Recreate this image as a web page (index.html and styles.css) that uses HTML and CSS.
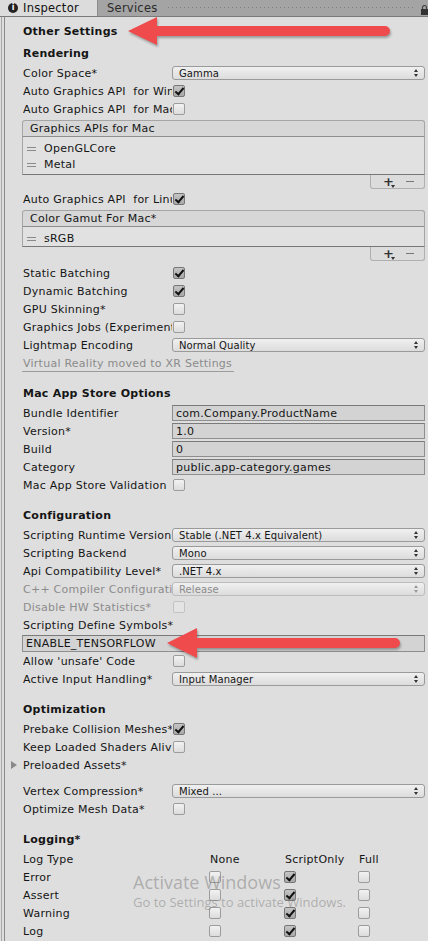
FILE: index.html
```html
<!DOCTYPE html>
<html>
<head>
<meta charset="utf-8">
<link rel="stylesheet" href="styles.css">
</head>
<body>
<div class="tabbar">
  <div class="tab active"><span class="info">i</span><span>Inspector</span></div>
  <div class="tab">Services</div>
  <div class="drag"></div>
  <svg class="lock" width="7" height="10" viewBox="0 0 7 10"><path d="M1.5 4V2.5a2 2 0 0 1 4 0V4" fill="none" stroke="#444" stroke-width="1.2"/><rect x="0" y="4" width="7" height="6" fill="#333"/></svg>
</div>
<div class="panel">
 <div class="inner">
  <div class="row heading">Other Settings</div>

  <section class="sec sec-first">
    <div class="row heading">Rendering</div>
    <div class="row"><span class="label">Color Space*</span><div class="popup"><span>Gamma</span><i class="arr"></i></div></div>
    <div class="row"><span class="label">Auto Graphics API  for Windows</span><span class="cb on"></span></div>
    <div class="row"><span class="label">Auto Graphics API  for Mac</span><span class="cb"></span></div>
    <div class="list list-a">
      <div class="list-head">Graphics APIs for Mac</div>
      <div class="list-body">
        <div class="item"><span class="handle"></span>OpenGLCore</div>
        <div class="item"><span class="handle"></span>Metal</div>
      </div>
      <div class="list-foot"><span class="plus">+</span><span class="minus"></span></div>
    </div>
    <div class="row"><span class="label">Auto Graphics API  for Linux</span><span class="cb on"></span></div>
    <div class="list list-b">
      <div class="list-head">Color Gamut For Mac*</div>
      <div class="list-body short">
        <div class="item"><span class="handle"></span>sRGB</div>
      </div>
      <div class="list-foot"><span class="plus">+</span><span class="minus"></span></div>
    </div>
    <div class="row"><span class="label">Static Batching</span><span class="cb on"></span></div>
    <div class="row"><span class="label">Dynamic Batching</span><span class="cb on"></span></div>
    <div class="row"><span class="label">GPU Skinning*</span><span class="cb"></span></div>
    <div class="row"><span class="label">Graphics Jobs (Experimental)</span><span class="cb"></span></div>
    <div class="row"><span class="label">Lightmap Encoding</span><div class="popup"><span>Normal Quality</span><i class="arr"></i></div></div>
    <div class="row"><span class="vr">Virtual Reality moved to XR Settings</span></div>
  </section>

  <section class="sec">
    <div class="row heading">Mac App Store Options</div>
    <div class="row"><span class="label">Bundle Identifier</span><div class="field">com.Company.ProductName</div></div>
    <div class="row"><span class="label">Version*</span><div class="field">1.0</div></div>
    <div class="row"><span class="label">Build</span><div class="field">0</div></div>
    <div class="row"><span class="label">Category</span><div class="field">public.app-category.games</div></div>
    <div class="row"><span class="label">Mac App Store Validation</span><span class="cb"></span></div>
  </section>

  <section class="sec">
    <div class="row heading">Configuration</div>
    <div class="row"><span class="label">Scripting Runtime Version</span><div class="popup"><span>Stable (.NET 4.x Equivalent)</span><i class="arr"></i></div></div>
    <div class="row"><span class="label">Scripting Backend</span><div class="popup"><span>Mono</span><i class="arr"></i></div></div>
    <div class="row"><span class="label">Api Compatibility Level*</span><div class="popup"><span>.NET 4.x</span><i class="arr"></i></div></div>
    <div class="row dis"><span class="label">C++ Compiler Configuration</span><div class="popup"><span>Release</span><i class="arr"></i></div></div>
    <div class="row dis"><span class="label">Disable HW Statistics*</span><span class="cb"></span></div>
    <div class="row"><span class="label wide">Scripting Define Symbols*</span></div>
    <div class="row"><div class="field full">ENABLE_TENSORFLOW</div></div>
    <div class="row"><span class="label">Allow 'unsafe' Code</span><span class="cb"></span></div>
    <div class="row"><span class="label">Active Input Handling*</span><div class="popup"><span>Input Manager</span><i class="arr"></i></div></div>
  </section>

  <section class="sec">
    <div class="row heading">Optimization</div>
    <div class="row"><span class="label">Prebake Collision Meshes*</span><span class="cb on"></span></div>
    <div class="row"><span class="label">Keep Loaded Shaders Alive*</span><span class="cb"></span></div>
    <div class="row foldout"><i class="tri"></i><span>Preloaded Assets*</span></div>
    <div class="row gap"><span class="label">Vertex Compression*</span><div class="popup"><span>Mixed ...</span><i class="arr"></i></div></div>
    <div class="row"><span class="label">Optimize Mesh Data*</span><span class="cb"></span></div>
  </section>

  <section class="sec">
    <div class="row heading">Logging*</div>
    <div class="log">
      <span>Log Type</span><span class="ch">None</span><span class="ch">ScriptOnly</span><span class="ch">Full</span>
      <span>Error</span><span><i class="cb"></i></span><span><i class="cb on"></i></span><span><i class="cb"></i></span>
      <span>Assert</span><span><i class="cb"></i></span><span><i class="cb on"></i></span><span><i class="cb"></i></span>
      <span>Warning</span><span><i class="cb"></i></span><span><i class="cb on"></i></span><span><i class="cb"></i></span>
      <span>Log</span><span><i class="cb"></i></span><span><i class="cb on"></i></span><span><i class="cb"></i></span>
    </div>
  </section>
 </div>
</div>

<svg class="arrow arrow-1" width="280" height="45" viewBox="0 0 280 45"><path d="M8 22 L37 8 L37 17 L265 17 A5 5 0 0 1 265 27 L37 27 L37 36 Z" fill="#ef4a4c"/></svg>
<svg class="arrow arrow-2" width="250" height="45" viewBox="0 0 250 45"><path d="M7 23 L37 8 L37 18 L235 18 A5 5 0 0 1 235 28 L37 28 L37 38 Z" fill="#ef4a4c"/></svg>

<div class="watermark">
  <div class="wm1">Activate Windows</div>
  <div class="wm2">Go to Settings to activate Windows.</div>
</div>
</body>
</html>
```

FILE: styles.css
```css
html, body { margin: 0; padding: 0; }
body {
  width: 428px;
  height: 941px;
  overflow: hidden;
  position: relative;
  background: #dedede;
  font-family: "DejaVu Sans", Verdana, sans-serif;
  font-size: 11px;
  letter-spacing: 0.25px;
  color: #151515;
}

/* tab bar */
.tabbar {
  height: 16px;
  background: #a4a4a4;
  border-bottom: 1px solid #7a7a7a;
  display: flex;
  align-items: stretch;
}
.tab {
  display: flex;
  align-items: center;
  color: #2a2a2a;
  font-size: 11.5px;
  padding: 0 8px 0 9px;
}
.tab.active {
  width: 98px;
  box-sizing: border-box;
  background: #dcdcdc;
  padding-left: 8px;
  gap: 5px;
  color: #111;
  border-right: 1px solid #8c8c8c;
}
.info {
  width: 10px;
  height: 10px;
  border-radius: 50%;
  background: #222;
  color: #fff;
  font-size: 8px;
  font-weight: bold;
  display: flex;
  align-items: center;
  justify-content: center;
  line-height: 1;
  letter-spacing: 0;
}
.drag {
  flex: 1;
  margin: 7px 6px 0 2px;
  height: 1px;
  background: repeating-linear-gradient(90deg, #7e7e7e 0 1px, transparent 1px 4px);
}
.lock { margin: 5px 0 0 0; flex: none; }

/* panel */
.panel {
  margin-left: 1px;
  border-left: 1px solid #a9a9a9;
  padding-left: 2px;
}
.inner {
  border-left: 1px solid #8a8a8a;
  padding: 5px 3px 0 18px;
  min-height: 930px;
}
.row {
  height: 18px;
  display: flex;
  align-items: center;
  white-space: pre;
}
.heading { font-weight: bold; margin-bottom: 2px; }
.sec { margin-top: 12px; }
.sec-first { margin-top: 4px; }
.label {
  width: 149px;
  flex: none;
  overflow: hidden;
  white-space: pre;
}
.label.wide { width: auto; }
.dis { color: #8c8c8c; }

/* checkbox */
.cb {
  display: block;
  width: 12px;
  height: 12px;
  box-sizing: border-box;
  margin-left: 1px;
  border: 1px solid #9c9c9c;
  border-radius: 2px;
  background: linear-gradient(#f2f2f2, #dcdcdc);
  flex: none;
  position: relative;
}
.cb.on {
  background: linear-gradient(#c4c4c4, #a8a8a8);
  border-color: #777;
}
.cb.on::after {
  content: "";
  position: absolute;
  left: 3px;
  top: 0px;
  width: 3px;
  height: 7px;
  border-right: 2px solid #111;
  border-bottom: 2px solid #111;
  transform: rotate(40deg);
}
.dis .cb { border-color: #c2c2c2; background: #e4e4e4; }

/* popup */
.popup {
  flex: 1;
  height: 14px;
  box-sizing: border-box;
  border: 1px solid #9a9a9a;
  border-radius: 3px;
  background: linear-gradient(#f0f0f0, #dcdcdc);
  display: flex;
  align-items: center;
  padding: 0 5px 0 6px;
  font-size: 10px;
  letter-spacing: 0.1px;
}
.popup span { flex: 1; }
.dis .popup { border-color: #bdbdbd; }
.arr {
  width: 5px;
  height: 8px;
  flex: none;
  position: relative;
}
.arr::before, .arr::after {
  content: "";
  position: absolute;
  left: 0;
  border-left: 2.5px solid transparent;
  border-right: 2.5px solid transparent;
}
.arr::before { top: 0; border-bottom: 3px solid #333; }
.arr::after { bottom: 0; border-top: 3px solid #333; }
.dis .arr::before { border-bottom-color: #999; }
.dis .arr::after { border-top-color: #999; }

/* text field */
.field {
  flex: 1;
  height: 16px;
  box-sizing: border-box;
  border: 1px solid #8e8e8e;
  border-top-color: #7a7a7a;
  background: #d3d3d3;
  padding-left: 3px;
  display: flex;
  align-items: center;
}
.field.full { margin-left: -1px; height: 17px; }

/* reorderable list */
.list { margin: 2px 0 1px -1px; display: flex; flex-direction: column; }
.list-b { margin-bottom: 3px; }
.list-head {
  height: 17px;
  box-sizing: border-box;
  border: 1px solid #a5a5a5;
  border-bottom-color: #8e8e8e;
  border-radius: 3px 3px 0 0;
  background: #d7d7d7;
  padding-left: 7px;
  display: flex;
  align-items: center;
}
.list-body {
  height: 38px;
  box-sizing: border-box;
  border: 1px solid #a5a5a5;
  border-top: none;
  border-bottom: 1px solid #777;
  background: #e1e1e1;
  padding-top: 3px;
}
.list-body.short { height: 20px; }
.item { height: 16px; display: flex; align-items: center; }
.handle {
  width: 9px;
  height: 2px;
  border-top: 1px solid #8a8a8a;
  border-bottom: 1px solid #8a8a8a;
  margin: 2px 8px 0 4px;
}
.list-foot {
  align-self: flex-end;
  width: 55px;
  height: 14px;
  box-sizing: border-box;
  border: 1px solid #b0b0b0;
  border-top: none;
  border-radius: 0 0 3px 3px;
  background: #dcdcdc;
  display: flex;
  align-items: center;
  justify-content: space-around;
  padding: 0 4px 0 6px;
}
.plus { font-weight: bold; font-size: 13px; color: #333; line-height: 1; position: relative; }
.plus::after {
  content: "";
  position: absolute;
  left: 8px;
  top: 10px;
  border-left: 2px solid transparent;
  border-right: 2px solid transparent;
  border-top: 3px solid #333;
}
.minus { width: 8px; height: 1px; background: #777; }

/* misc */
.vr {
  color: #8b8b8b;
  border-bottom: 1px solid #9c9c9c;
  padding: 0 2px 1px 1px;
  margin-left: -1px;
  margin-top: 2px;
}
.foldout { margin-left: -12px; }
.tri {
  width: 0;
  height: 0;
  border-top: 4px solid transparent;
  border-bottom: 4px solid transparent;
  border-left: 6px solid #8a8a8a;
  margin-right: 6px;
}
.gap { margin-top: 8px; }

.log {
  display: grid;
  grid-template-columns: 186px 75px 74px auto;
  grid-auto-rows: 18px;
  align-items: center;
}
.log .ch { padding-left: 1px; }
.log .cb { margin-left: 0; }

/* overlays */
.arrow { position: absolute; filter: drop-shadow(1px 2px 1px rgba(0,0,0,0.3)); }
.arrow-1 { left: 120px; top: 9px; }
.arrow-2 { left: 160px; top: 620px; }

.watermark {
  position: absolute;
  left: 133px;
  top: 871px;
  color: rgba(110, 110, 110, 0.45);
  font-family: "Open Sans", "Noto Sans", sans-serif;
  letter-spacing: 0;
  pointer-events: none;
}
.wm1 { font-size: 18px; line-height: 22px; }
.wm2 { font-size: 13px; line-height: 18px; }
```
